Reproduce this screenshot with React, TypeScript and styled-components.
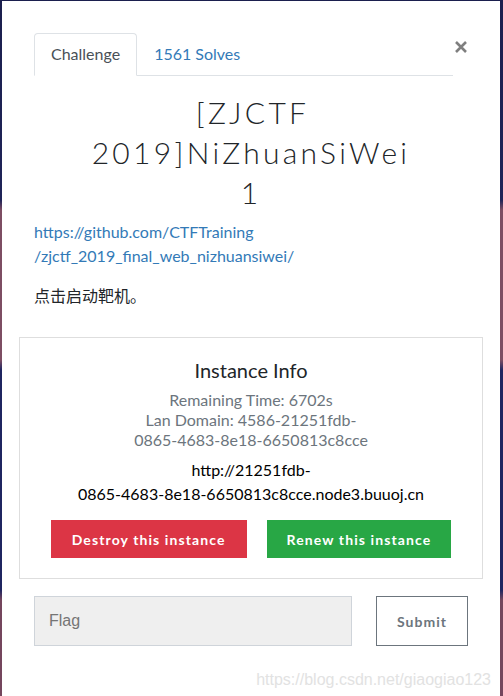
import styled, { createGlobalStyle } from 'styled-components';

const GlobalStyle = createGlobalStyle`
    * {
        box-sizing: border-box;
    }

    body {
        margin: 0;
        background: linear-gradient(#1b1f4e 0px, #1f2458 200px, #7d4d63 210px, #7d4d63 360px, #1f2560 370px, #1f2560 590px, #74465d 600px);
        font-family: Lato, "Noto Sans CJK SC", sans-serif;
        color: #212529;
    }
`

const Page = styled.div`
    min-height: 696px;
    padding: 1px 3px 0 2px;
`

const Modal = styled.div`
    background: #ffffff;
    min-height: 695px;
    padding: 32px;
    position: relative;
`

const Header = styled.div`
    display: flex;
    align-items: flex-start;
`

const Tabs = styled.div`
    border-bottom: 1px solid #dee2e6;
    display: flex;
    flex: 1;
`

const Tab = styled.div<{ $active?: boolean }>`
    background: ${props => props.$active ? '#ffffff' : 'transparent'};
    border: 1px solid ${props => props.$active ? '#dee2e6' : 'transparent'};
    border-bottom-color: ${props => props.$active ? '#ffffff' : 'transparent'};
    border-radius: 4px 4px 0 0;
    color: ${props => props.$active ? '#495057' : '#337ab7'};
    font-size: 16px;
    line-height: 24px;
    margin-bottom: ${props => props.$active ? '-1px' : '0'};
    padding: 8px 16px;
`

const CloseButton = styled.button`
    background: none;
    border: none;
    cursor: pointer;
    display: flex;
    margin: 7px 0 0 1px;
    padding: 0;
`

const Title = styled.h3`
    font-family: Lato, sans-serif;
    font-size: 30px;
    font-weight: 300;
    letter-spacing: 3.3px;
    line-height: 40px;
    margin: 16px auto 8px;
    max-width: 326px;
    text-align: center;
    text-indent: 3px;
`

const Text = styled.p`
    font-size: 16px;
    line-height: 24px;
    margin: 0 0 16px;
`

const Link = styled.a`
    color: #337ab7;
    text-decoration: none;
`

const InstanceCard = styled.div`
    border: 1px solid #dedede;
    margin: 29px -15px 0;
    padding: 20px;
    text-align: center;
`

const CardTitle = styled.h5`
    font-size: 20px;
    font-weight: 400;
    line-height: 24px;
    margin: 0 0 8px;
`

const Muted = styled.div`
    color: #6c757d;
    font-size: 16px;
    line-height: 20px;
`

const Address = styled.div`
    color: #000000;
    font-size: 16px;
    line-height: 24px;
    margin-top: 8px;
`

const ButtonRow = styled.div`
    display: flex;
    gap: 20px;
    justify-content: center;
    margin-top: 14px;
`

const ActionButton = styled.button<{ $tone: 'danger' | 'success' }>`
    background: ${props => props.$tone === 'danger' ? '#dc3545' : '#28a745'};
    border: none;
    color: #ffffff;
    cursor: pointer;
    font-family: Lato, sans-serif;
    font-size: 14px;
    font-weight: 700;
    height: 38px;
    letter-spacing: 1.1px;
    padding: 0 ${props => props.$tone === 'danger' ? '21px' : '20px'};
`

const SubmitRow = styled.div`
    display: flex;
    gap: 24px;
    margin-top: 17px;
`

const FlagInput = styled.input`
    background: #efefef;
    border: 1px solid #cfd4da;
    color: #495057;
    font-family: "Liberation Sans", Arial, sans-serif;
    font-size: 16px;
    height: 50px;
    padding: 0 14px;
    width: 318px;

    ::placeholder {
        color: #737b84;
    }
`

const SubmitButton = styled.button`
    background: #ffffff;
    border: 1px solid #6c757d;
    color: #6c757d;
    cursor: pointer;
    font-family: Lato, sans-serif;
    font-size: 14px;
    font-weight: 700;
    height: 50px;
    letter-spacing: 1px;
    width: 92px;
`

const Watermark = styled.div`
    bottom: 7px;
    color: #e2e2e2;
    font-family: "Liberation Sans", Arial, sans-serif;
    font-size: 16px;
    position: absolute;
    right: 9px;
`

const App = () => {
    return (
        <Page>
            <GlobalStyle />
            <Modal>
                <Header>
                    <Tabs>
                        <Tab $active>Challenge</Tab>
                        <Tab>1561 Solves</Tab>
                    </Tabs>
                    <CloseButton aria-label="Close">
                        <svg width="14" height="14" viewBox="0 0 14 14">
                            <path d="M2 2 L12 12 M12 2 L2 12" stroke="#7f7f7f" strokeWidth="2.6" strokeLinecap="butt" />
                        </svg>
                    </CloseButton>
                </Header>
                <Title>[ZJCTF 2019]NiZhuanSiWei 1</Title>
                <Text>
                    <Link href="#">https://github.com/CTFTraining<wbr />/zjctf_2019_final_web_nizhuansiwei/</Link>
                </Text>
                <Text>点击启动靶机。</Text>
                <InstanceCard>
                    <CardTitle>Instance Info</CardTitle>
                    <Muted>
                        Remaining Time: 6702s<br />
                        Lan Domain: 4586-21251fdb-<br />
                        0865-4683-8e18-6650813c8cce
                    </Muted>
                    <Address>
                        http://21251fdb-<br />
                        0865-4683-8e18-6650813c8cce.node3.buuoj.cn
                    </Address>
                    <ButtonRow>
                        <ActionButton $tone="danger">Destroy this instance</ActionButton>
                        <ActionButton $tone="success">Renew this instance</ActionButton>
                    </ButtonRow>
                </InstanceCard>
                <SubmitRow>
                    <FlagInput placeholder="Flag" />
                    <SubmitButton>Submit</SubmitButton>
                </SubmitRow>
                <Watermark>https://blog.csdn.net/giaogiao123</Watermark>
            </Modal>
        </Page>
    )
}

export default App;
